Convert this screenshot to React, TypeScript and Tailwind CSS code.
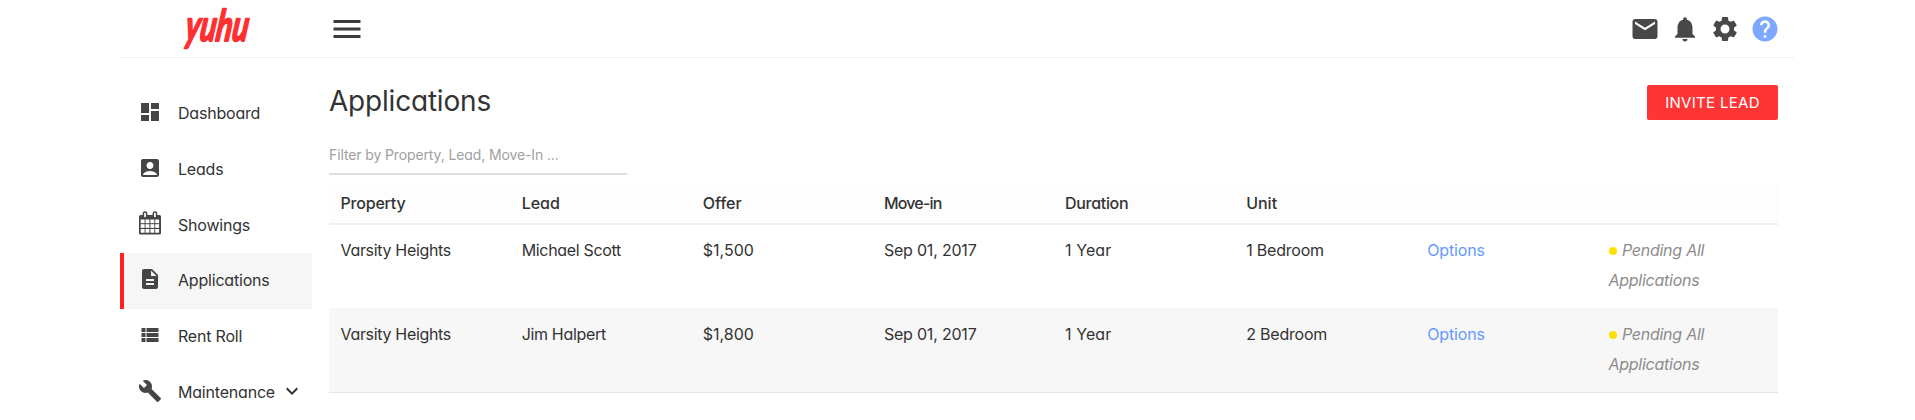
import type { ReactNode } from 'react';
import {
  MdAccountBox,
  MdBuild,
  MdDashboard,
  MdDescription,
  MdHelp,
  MdKeyboardArrowDown,
  MdMail,
  MdMenu,
  MdNotifications,
  MdSettings,
} from 'react-icons/md';

function CalendarIcon() {
  return (
    <svg width="22" height="24" viewBox="0 0 22 24" className="-translate-y-px">
      <rect x="0" y="4" width="22" height="19.5" rx="1.5" fill="#454545" />
      <g fill="#fff">
        {[8.5, 13.2, 18].map((y) =>
          [1.7, 6.5, 11.4, 16.2].map((x) => (
            <rect key={`${x}-${y}`} x={x} y={y} width="3.9" height="3.7" />
          )),
        )}
      </g>
      <g fill="#fff" stroke="#454545" strokeWidth="1.5">
        <rect x="4.4" y="1" width="3.3" height="6" rx="1.5" />
        <rect x="14.3" y="1" width="3.3" height="6" rx="1.5" />
      </g>
    </svg>
  );
}

function ListIcon() {
  return (
    <svg width="24" height="24" viewBox="0 0 24 24" fill="currentColor">
      <path d="M3.5 5h4v4h-4zM3.5 10h4v4h-4zM3.5 15h4v4h-4zM8.5 5h12v4h-12zM8.5 10h12v4h-12zM8.5 15h12v4h-12z" />
    </svg>
  );
}

function Logo() {
  return (
    <svg width="76" height="57" viewBox="0 0 76 57" className="ml-[57px] overflow-visible" role="img" aria-label="yuhu">
      <text
        transform="translate(7 41) skewX(-8) scale(1 1.55)"
        textLength="63"
        lengthAdjust="spacingAndGlyphs"
        fill="#ff2f31"
        stroke="#ff2f31"
        strokeWidth="1.2"
        strokeLinejoin="round"
        className="font-['Lato'] text-[28px] font-bold italic"
      >
        yuhu
      </text>
    </svg>
  );
}

type NavItem = { label: string; icon: ReactNode; active?: boolean; expandable?: boolean };

const nav: NavItem[] = [
  { label: 'Dashboard', icon: <MdDashboard size={24} /> },
  { label: 'Leads', icon: <MdAccountBox size={24} /> },
  { label: 'Showings', icon: <CalendarIcon /> },
  { label: 'Applications', icon: <MdDescription size={24} />, active: true },
  { label: 'Rent Roll', icon: <ListIcon /> },
  { label: 'Maintenance', icon: <MdBuild size={24} />, expandable: true },
];

const columns = [
  { label: 'Property', tracking: 'tracking-[-0.2px]' },
  { label: 'Lead', tracking: '' },
  { label: 'Offer', tracking: '' },
  { label: 'Move-in', tracking: 'tracking-[-0.8px]' },
  { label: 'Duration', tracking: 'tracking-[-0.3px]' },
  { label: 'Unit', tracking: '' },
  { label: '', tracking: '' },
  { label: '', tracking: '' },
];

const rows = [
  { property: 'Varsity Heights', lead: 'Michael Scott', offer: '$1,500', moveIn: 'Sep 01, 2017', duration: '1 Year', unit: '1 Bedroom' },
  { property: 'Varsity Heights', lead: 'Jim Halpert', offer: '$1,800', moveIn: 'Sep 01, 2017', duration: '1 Year', unit: '2 Bedroom' },
];

export default function App() {
  return (
    <div className="h-[420px] overflow-hidden bg-white font-['Inter',sans-serif] text-base text-[#333] [font-feature-settings:'cv11']">
      <div className="ml-[120px] w-[1675px]">
        <header className="flex h-[58px] items-center border-b border-[#f3f3f3]">
          <Logo />
          <MdMenu size={36} className="ml-[75.5px] text-[#3c3c3c]" />
          <div className="mr-[15px] ml-auto flex gap-[10px] text-[#484848]">
            <MdMail size={30} />
            <MdNotifications size={30} />
            <MdSettings size={30} />
            <MdHelp size={30} className="text-[#7ea8ff]" />
          </div>
        </header>

        <div className="flex">
          <nav className="w-[192px] shrink-0 pt-[27.7px]">
            {nav.map((item) => (
              <a
                key={item.label}
                className={`flex h-[55.8px] items-center border-l-4 pb-px pl-[14px] ${
                  item.active ? 'border-[#ff2222] bg-[#f6f6f6]' : 'border-transparent'
                }`}
              >
                <span className="flex w-6 -translate-y-px justify-center text-[#454545]">{item.icon}</span>
                <span className="ml-[16px] tracking-[-0.2px]">{item.label}</span>
                {item.expandable && <MdKeyboardArrowDown size={24} className="ml-[5px] -translate-y-px" />}
              </a>
            ))}
          </nav>

          <main className="ml-[17px] w-[1449px]">
            <div className="flex h-[79px] items-start justify-between">
              <h1 className="mt-[25px] text-[28px] leading-9 font-normal tracking-[-0.2px]">Applications</h1>
              <button className="mt-[27px] h-[35px] w-[131px] rounded-[2px] bg-[#ff3535] pt-px text-[15px] tracking-[0.3px] text-white">
                INVITE LEAD
              </button>
            </div>
            <input
              placeholder="Filter by Property, Lead, Move-In ..."
              className="block h-[38px] w-[298px] border-b-2 border-[#dedede] pb-px text-sm tracking-[-0.12px] outline-none placeholder:text-[#a0a0a0]"
            />
            <div className="mt-[8px] grid h-[42px] grid-cols-8 items-center border-b-2 border-[#efefef] bg-[#fdfdfd] pb-px font-medium">
              {columns.map((c, i) => (
                <div key={i} className={`pl-[11.5px] ${c.tracking}`}>
                  {c.label}
                </div>
              ))}
            </div>
            {rows.map((r) => (
              <div
                key={r.lead}
                className="grid h-[83px] grid-cols-8 pt-[10px] leading-[30px] tracking-[-0.32px] last:h-[85px] last:border-b last:border-[#e6e6e6] last:bg-[#f7f7f7] last:pt-[11px] *:pl-[11.5px]"
              >
                <div>{r.property}</div>
                <div>{r.lead}</div>
                <div className="tracking-normal">{r.offer}</div>
                <div className="tracking-[-0.2px]">{r.moveIn}</div>
                <div className="tracking-[0.1px]">{r.duration}</div>
                <div className="tracking-[-0.2px]">{r.unit}</div>
                <div className="tracking-[-0.15px] text-[#6699ff]">Options</div>
                <div className="pr-10 tracking-[-0.25px] text-[#8c8c8c] italic">
                  <span className="mr-[5px] ml-[0.5px] inline-block size-2 rounded-full bg-[#ffe100] align-[1px]" />
                  Pending All Applications
                </div>
              </div>
            ))}
          </main>
        </div>
      </div>
    </div>
  );
}
